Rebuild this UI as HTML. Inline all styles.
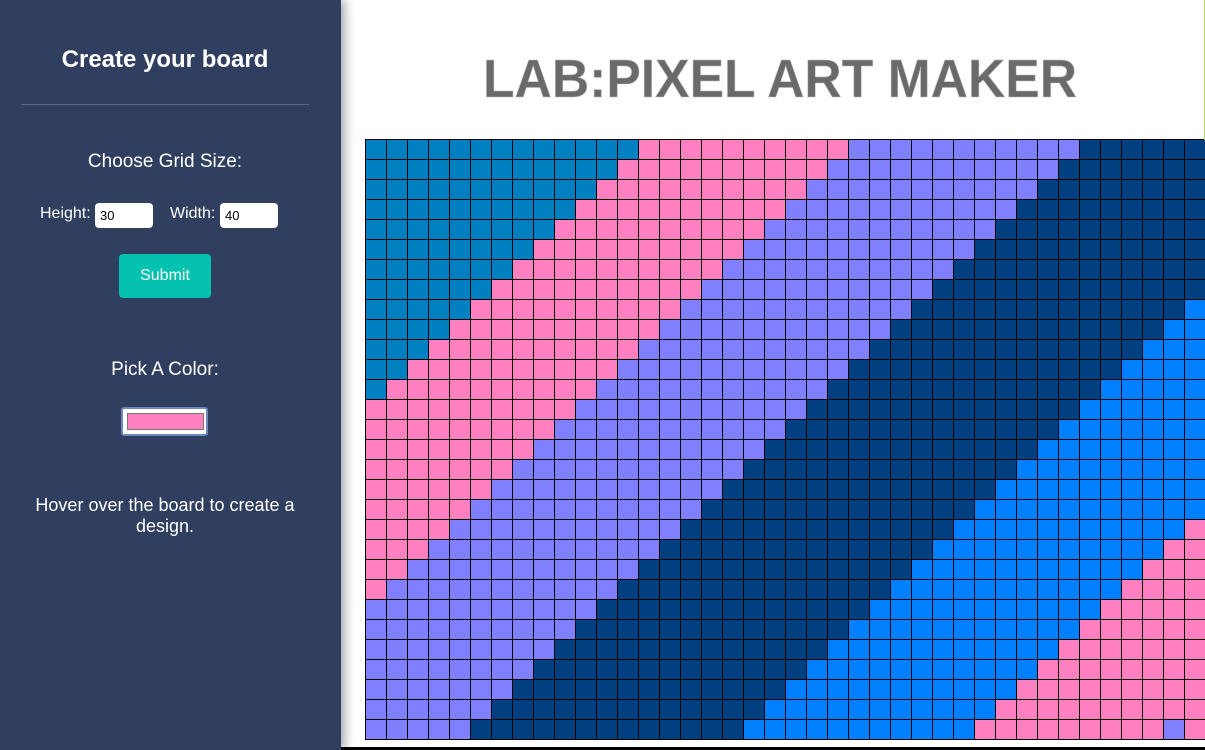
<!DOCTYPE html>
<html><head><meta charset="utf-8"><style>
html,body{margin:0;padding:0;width:1205px;height:750px;overflow:hidden;background:#fff;font-family:"Liberation Sans",Arial,sans-serif}
#side{position:absolute;left:0;top:0;width:341px;height:750px;background:#303f5f;box-shadow:4px 0 10px rgba(0,0,0,.35);color:#fff;text-align:center}
#side h1{margin:0;position:absolute;top:46px;left:0;width:330px;font-size:24px;font-weight:bold}
#side hr{position:absolute;top:104px;left:21px;width:288px;border:0;border-top:1px solid #5d6a85;margin:0}
.t{position:absolute;left:0;width:330px;font-size:19px}
.lab{position:absolute;font-size:16px;top:205px}
.inp{position:absolute;top:203px;height:25px;width:58px;background:#fff;border-radius:4px;color:#000;font-size:13px;text-align:left;line-height:25px;box-sizing:border-box;padding-left:5px}
#btn{position:absolute;left:119px;top:254px;width:92px;height:44px;background:#04c1b0;border-radius:4px;font-size:16px;line-height:44px}
#col{position:absolute;left:121px;top:407px;width:87px;height:29px;box-sizing:border-box;border:2px solid #6f87c0;background:#fff;border-radius:3px}
#col div{position:absolute;left:4px;top:4px;width:75px;height:15px;background:#ff80c0;border:1px solid #777}
#grid{position:absolute;left:365px;top:139px;display:grid;grid-template-columns:repeat(40,20px);grid-auto-rows:19px;gap:1px;padding:1px;background:#000;width:841px}
</style></head><body>
<div id="side">
<h1>Create your board</h1>
<hr>
<div class="t" style="top:151px">Choose Grid Size:</div>
<div class="lab" style="left:40px">Height:</div>
<div class="inp" style="left:95px">30</div>
<div class="lab" style="left:170px">Width:</div>
<div class="inp" style="left:220px">40</div>
<div id="btn">Submit</div>
<div class="t" style="top:359px">Pick A Color:</div>
<div id="col"><div></div></div>
<div class="t" style="top:495px;font-size:18px;line-height:21px;left:20px;width:290px">Hover over the board to create a design.</div>
</div>
<svg style="position:absolute;left:480px;top:50px" width="600" height="55"><text x="3" y="47" textLength="594" lengthAdjust="spacingAndGlyphs" font-family="Liberation Sans" font-weight="bold" font-size="54" fill="#6a6a6a" stroke="#bbb" stroke-width="0.6">LAB:PIXEL ART MAKER</text></svg>
<div id="grid"></div>
<div style="position:absolute;left:341px;top:747px;width:864px;height:3px;background:#000"></div>
<div style="position:absolute;left:1204px;top:0;width:1px;height:140px;background:#b5d96a"></div>
<script>
var g=document.getElementById('grid'),h='';
var th=[13,23,34,47,58],cs=['#0080c0','#ff80c0','#8080ff','#004080','#0080ff','#ff80c0'];
for(var r=0;r<30;r++)for(var c=0;c<40;c++){var d=r+c,i=0;while(i<th.length&&d>=th[i])i++;var col=cs[i];if(r==29&&c==38)col='#8080ff';h+='<div style="background:'+col+'"></div>';}
g.innerHTML=h;
</script>
</body></html>
